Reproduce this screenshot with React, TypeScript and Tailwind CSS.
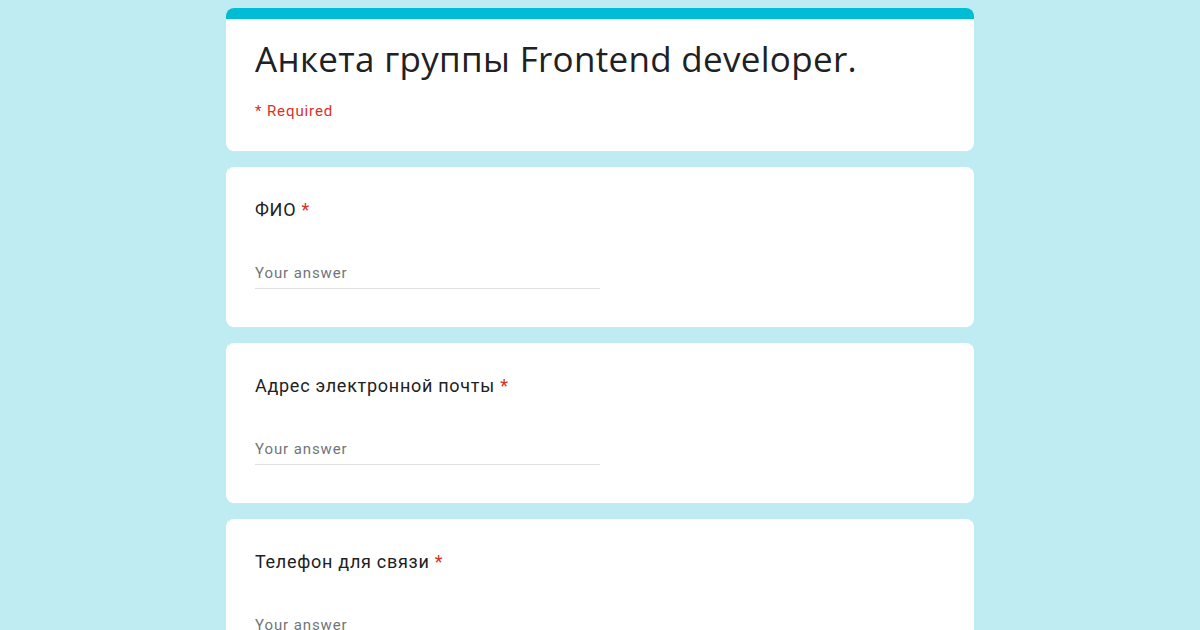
const questions = ['ФИО', 'Адрес электронной почты', 'Телефон для связи']

function Question({ title }: { title: string }) {
  return (
    <div className="rounded-lg bg-white px-[29px] pt-[31px] pb-[38px]">
      <div
        className="text-[18px] leading-6 tracking-[0.04em] text-[#202124]"
        style={{ fontFamily: 'Roboto, sans-serif' }}
      >
        {title} <span className="text-[#d93025]">*</span>
      </div>
      <div className="mt-[41px] w-[345px] border-b border-[#e0e0e0] pb-[5px]">
        <div
          className="text-[15px] leading-5 tracking-[0.06em] text-[#70757a]"
          style={{ fontFamily: 'Roboto, sans-serif' }}
        >
          Your answer
        </div>
      </div>
    </div>
  )
}

export default function App() {
  return (
    <div className="h-[630px] overflow-hidden bg-[#bfecf3] pt-2">
      <div className="mx-auto flex w-[748px] flex-col gap-4">
        <div className="overflow-hidden rounded-lg bg-white">
          <div className="h-[11px] bg-[#00bcd4]" />
          <div className="px-[29px] pt-[20px] pb-[30px]">
            <h1
              className="text-[35px] leading-10 tracking-[0.3px] text-[#202124]"
              style={{ fontFamily: '"Open Sans", sans-serif' }}
            >
              Анкета группы Frontend developer.
            </h1>
            <div
              className="mt-[22px] text-[15px] leading-5 tracking-[0.06em] text-[#d93025]"
              style={{ fontFamily: 'Roboto, sans-serif' }}
            >
              * Required
            </div>
          </div>
        </div>
        {questions.map((q) => (
          <Question key={q} title={q} />
        ))}
      </div>
    </div>
  )
}
